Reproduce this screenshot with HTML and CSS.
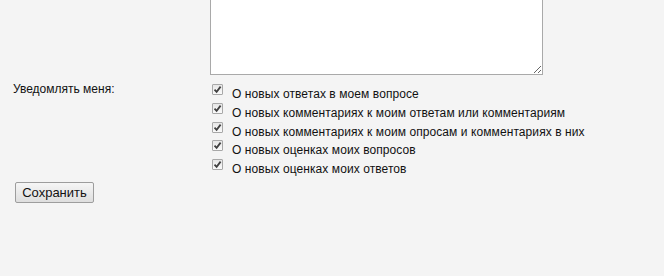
FILE: index.html
```html
<!DOCTYPE html>
<html>
<head>
<meta charset="utf-8">
<link rel="stylesheet" href="styles.css">
</head>
<body>
<form class="form">
  <div class="row">
    <div class="label"></div>
    <div class="field"><textarea class="area"></textarea></div>
  </div>
  <div class="row">
    <div class="label notify">Уведомлять меня:</div>
    <div class="field checks">
      <label class="check"><input type="checkbox" checked><span>О новых ответах в моем вопросе</span></label>
      <label class="check"><input type="checkbox" checked><span>О новых комментариях к моим ответам или комментариям</span></label>
      <label class="check"><input type="checkbox" checked><span>О новых комментариях к моим опросам и комментариях в них</span></label>
      <label class="check"><input type="checkbox" checked><span>О новых оценках моих вопросов</span></label>
      <label class="check"><input type="checkbox" checked><span>О новых оценках моих ответов</span></label>
    </div>
  </div>
  <div class="actions"><button type="button" class="save">Сохранить</button></div>
</form>
</body>
</html>
```
FILE: styles.css
```css
html, body {
  margin: 0;
  padding: 0;
  background: #f4f4f4;
  font-family: "Liberation Sans", Arial, sans-serif;
  font-size: 12px;
  color: #111;
}
.form {
  display: flex;
  flex-direction: column;
}
.row {
  display: grid;
  grid-template-columns: 210px 1fr;
}
.label {
  padding-left: 13px;
  line-height: 14px;
}
.area {
  display: block;
  box-sizing: border-box;
  width: 333px;
  height: 105px;
  margin: -30px 0 0 0;
  border: 1px solid #a9a9a9;
  background: #fff;
  padding: 2px;
  resize: both;
}
.notify {
  padding-top: 7px;
}
.checks {
  display: flex;
  flex-direction: column;
  padding-top: 6px;
}
.check {
  display: flex;
  align-items: flex-start;
  height: 18.75px;
}
.check input {
  -webkit-appearance: none;
  appearance: none;
  box-sizing: border-box;
  margin: 3px 9px 0 2px;
  width: 11px;
  height: 11px;
  border: 1px solid #a8a8a8;
  border-radius: 1px;
  background: linear-gradient(#e6e6e6, #fafafa);
}
.check input:checked {
  background:
    url("data:image/svg+xml,%3Csvg xmlns='http://www.w3.org/2000/svg' width='9' height='9' viewBox='0 0 9 9'%3E%3Cpath d='M1.5 4.6 L3.6 6.8 L7.6 1.6' fill='none' stroke='%23404040' stroke-width='1.8'/%3E%3C/svg%3E") center / 9px 9px no-repeat,
    linear-gradient(#e6e6e6, #fafafa);
}
.check span {
  padding-top: 6px;
  line-height: 14px;
  letter-spacing: 0.08px;
}
.actions {
  padding: 7px 0 0 15px;
}
.save {
  font-family: "Liberation Sans", Arial, sans-serif;
  font-size: 13px;
  color: #111;
  width: 79px;
  height: 21px;
  padding: 0;
  border: 1px solid #9d9d9d;
  border-radius: 2px;
  background: linear-gradient(#f6f6f6, #dedede);
}
```
